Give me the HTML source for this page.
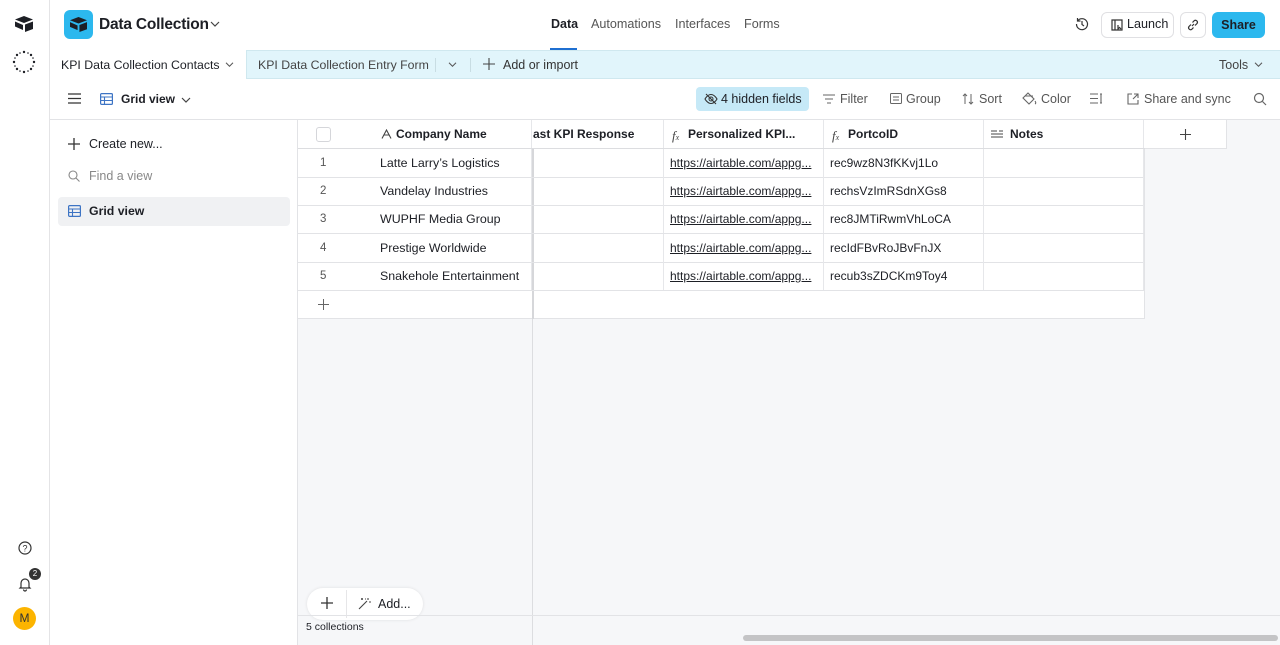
<!DOCTYPE html>
<html><head><meta charset="utf-8"><style>
*{box-sizing:border-box;margin:0;padding:0}
body{width:1280px;height:645px;overflow:hidden;font-family:"Liberation Sans",sans-serif;font-size:13px;color:#1d1f25;background:#f6f7f9;position:relative}
.a{position:absolute}
.t{position:absolute;white-space:nowrap}
svg{position:absolute}
.row{position:absolute;left:298px;height:29px;border-bottom:1px solid #e2e3e6}
.cell{position:absolute;top:0;height:28px;border-right:1px solid #e6e7ea;line-height:28px;padding-left:6px;font-size:12.4px;white-space:nowrap;overflow:hidden}
.h{font-weight:bold;font-size:12px}
</style></head><body>
<!-- left rail -->
<div class="a" style="left:0;top:0;width:50px;height:645px;background:#fff;border-right:1px solid #e4e4e6"></div>
<svg style="left:14px;top:15px" width="20" height="18" viewBox="0 0 20 18"><path d="M10 1L19 4.5L10 8L1 4.5Z" fill="#1d1f25"/><path d="M11 9.5L19 6.5V14L11 17Z" fill="#1d1f25"/><path d="M1 6.5L9 10V15L1 11.5Z" fill="#1d1f25"/></svg>
<svg style="left:12px;top:50px" width="24" height="24" viewBox="0 0 24 24"><g fill="#1d1f25"><circle cx="12" cy="2" r="1.2"/><circle cx="19" cy="5" r="1.2"/><circle cx="22" cy="12" r="1.2"/><circle cx="19" cy="19" r="1.2"/><circle cx="12" cy="22" r="1.2"/><circle cx="5" cy="19" r="1.2"/><circle cx="2" cy="12" r="1.2"/><circle cx="5" cy="5" r="1.2"/><circle cx="16" cy="3" r=".8"/><circle cx="21" cy="8" r=".8"/><circle cx="21" cy="16" r=".8"/><circle cx="16" cy="21" r=".8"/><circle cx="8" cy="21" r=".8"/><circle cx="3" cy="16" r=".8"/><circle cx="3" cy="8" r=".8"/><circle cx="8" cy="3" r=".8"/></g></svg>
<svg style="left:18px;top:541px" width="14" height="14" viewBox="0 0 14 14"><circle cx="7" cy="7" r="6" fill="none" stroke="#333" stroke-width="1.2"/><text x="7" y="10.5" font-size="9" text-anchor="middle" fill="#333" font-family="Liberation Sans">?</text></svg>
<svg style="left:17px;top:576px" width="16" height="16" viewBox="0 0 16 16"><path d="M4 11V7a4 4 0 0 1 8 0v4l1 1H3Z M6.5 13.5a1.5 1.5 0 0 0 3 0" fill="none" stroke="#333" stroke-width="1.2"/></svg>
<div class="a" style="left:29px;top:568px;width:12px;height:12px;border-radius:6px;background:#333;color:#fff;font-size:8px;text-align:center;line-height:12px">2</div>
<div class="a" style="left:13px;top:607px;width:23px;height:23px;border-radius:12px;background:#fcb400;color:#333;font-size:12px;text-align:center;line-height:23px">M</div>

<!-- top bar -->
<div class="a" style="left:50px;top:0;width:1230px;height:50px;background:#fff"></div>
<div class="a" style="left:64px;top:10px;width:29px;height:29px;border-radius:6px;background:#2cb8ee"></div>
<svg style="left:69px;top:16px" width="19" height="17" viewBox="0 0 20 18"><path d="M10 1L19 4.5L10 8L1 4.5Z" fill="#1d1f25"/><path d="M11 9.5L19 6.5V14L11 17Z" fill="#1d1f25"/><path d="M1 6.5L9 10V15L1 11.5Z" fill="#1d1f25"/></svg>
<div class="t" style="left:99px;top:16px;font-size:15.5px;font-weight:bold;letter-spacing:-0.2px">Data Collection</div>
<svg style="left:210px;top:20px" width="10" height="8" viewBox="0 0 10 8"><path d="M1 2l4 4 4-4" fill="none" stroke="#444" stroke-width="1.2"/></svg>
<div class="t" style="left:551px;top:17px;font-size:12.5px;font-weight:bold;color:#1d1f25">Data</div>
<div class="a" style="left:550px;top:48px;width:27px;height:2px;background:#1f6fd1"></div>
<div class="t" style="left:591px;top:17px;color:#555;font-size:12.6px">Automations</div>
<div class="t" style="left:675px;top:17px;color:#555;font-size:12.6px">Interfaces</div>
<div class="t" style="left:744px;top:17px;color:#555;font-size:12.6px">Forms</div>
<svg style="left:1075px;top:17px" width="14" height="14" viewBox="0 0 14 14"><path d="M2.5 4A5.5 5.5 0 1 1 1.5 7M2.5 1v3h3M7 4v3.5l2 1.5" fill="none" stroke="#333" stroke-width="1.2"/></svg>
<div class="a" style="left:1101px;top:12px;width:73px;height:26px;border:1px solid #e0e0e3;border-radius:6px;background:#fff"></div>
<svg style="left:1110px;top:18px" width="14" height="14" viewBox="0 0 14 14"><path d="M2 2h10v10H2ZM5 2v10M8 7v4l1.5-1.5L11 11" fill="none" stroke="#333" stroke-width="1.2"/></svg>
<div class="t" style="left:1127px;top:17px;font-size:12.6px">Launch</div>
<div class="a" style="left:1180px;top:12px;width:26px;height:26px;border:1px solid #e0e0e3;border-radius:6px;background:#fff"></div>
<svg style="left:1186px;top:18px" width="14" height="14" viewBox="0 0 14 14"><path d="M6 8l2-2M5 6.5L3 8.5a2 2 0 0 0 2.8 2.8L7.5 9.5M9 7.5l2-2A2 2 0 0 0 8.2 2.7L6.5 4.5" fill="none" stroke="#333" stroke-width="1.2"/></svg>
<div class="a" style="left:1212px;top:12px;width:53px;height:26px;border-radius:6px;background:#2cb8ee;color:#1d1f25;font-weight:bold;font-size:12.5px;text-align:center;line-height:26px">Share</div>

<!-- tab bar -->
<div class="a" style="left:50px;top:50px;width:1230px;height:29px;background:#e1f5fb;border-top:1px solid #cfe8ef;border-bottom:1px solid #cfe8ef"></div>
<div class="a" style="left:50px;top:50px;width:197px;height:29px;background:#fff;border-right:1px solid #cfe8ef"></div>
<div class="t" style="left:61px;top:58px;font-size:12.3px;color:#1d1f25">KPI Data Collection Contacts</div>
<svg style="left:225px;top:61px" width="9" height="7" viewBox="0 0 10 8"><path d="M1 2l4 4 4-4" fill="none" stroke="#555" stroke-width="1.2"/></svg>
<div class="t" style="left:258px;top:58px;font-size:12.3px;color:#444">KPI Data Collection Entry Form</div>
<div class="a" style="left:435px;top:58px;width:1px;height:14px;background:#c8dde3"></div>
<svg style="left:448px;top:61px" width="9" height="7" viewBox="0 0 10 8"><path d="M1 2l4 4 4-4" fill="none" stroke="#555" stroke-width="1.2"/></svg>
<div class="a" style="left:470px;top:58px;width:1px;height:14px;background:#c8dde3"></div>
<svg style="left:483px;top:58px" width="12" height="12" viewBox="0 0 12 12"><path d="M6 0v12M0 6h12" stroke="#444" stroke-width="1.1"/></svg>
<div class="t" style="left:503px;top:58px;font-size:12.5px;color:#333">Add or import</div>
<div class="t" style="left:1219px;top:58px;font-size:12.5px;color:#444">Tools</div>
<svg style="left:1254px;top:61px" width="9" height="7" viewBox="0 0 10 8"><path d="M1 2l4 4 4-4" fill="none" stroke="#555" stroke-width="1.2"/></svg>

<!-- toolbar -->
<div class="a" style="left:50px;top:79px;width:1230px;height:41px;background:#fff;border-bottom:1px solid #e2e3e6"></div>
<svg style="left:68px;top:93px" width="13" height="11" viewBox="0 0 13 11"><path d="M0 1h13M0 5.5h13M0 10h13" stroke="#333" stroke-width="1.2"/></svg>
<svg style="left:100px;top:93px" width="13" height="12" viewBox="0 0 13 12"><rect x=".6" y=".6" width="11.8" height="10.8" rx="1" fill="none" stroke="#3d74c4" stroke-width="1.2"/><path d="M.6 4h11.8M.6 7.5h11.8M4.5 4v7.4" stroke="#3d74c4" stroke-width="1.1"/></svg>
<div class="t" style="left:121px;top:92px;font-weight:bold;font-size:12px">Grid view</div>
<svg style="left:181px;top:96px" width="10" height="8" viewBox="0 0 10 8"><path d="M1 2l4 4 4-4" fill="none" stroke="#444" stroke-width="1.2"/></svg>
<div class="a" style="left:696px;top:87px;width:113px;height:24px;border-radius:4px;background:#c6e9f7"></div>
<svg style="left:704px;top:93px" width="14" height="12" viewBox="0 0 14 12"><path d="M1 6s2.5-4.5 6-4.5S13 6 13 6s-2.5 4.5-6 4.5S1 6 1 6ZM2 1l10 10" fill="none" stroke="#333" stroke-width="1.1"/><circle cx="7" cy="6" r="2" fill="none" stroke="#333"/></svg>
<div class="t" style="left:721px;top:92px;font-size:12.5px">4 hidden fields</div>
<svg style="left:823px;top:94px" width="12" height="10" viewBox="0 0 12 10"><path d="M0 1h12M2 5h8M4 9h4" stroke="#666" stroke-width="1.1"/></svg>
<div class="t" style="left:840px;top:92px;font-size:12.5px;color:#555">Filter</div>
<svg style="left:890px;top:93px" width="12" height="11" viewBox="0 0 12 11"><rect x=".5" y=".5" width="11" height="10" rx="1" fill="none" stroke="#666"/><path d="M3 4h6M3 7h6" stroke="#666"/></svg>
<div class="t" style="left:906px;top:92px;font-size:12.5px;color:#555">Group</div>
<svg style="left:962px;top:93px" width="12" height="12" viewBox="0 0 12 12"><path d="M3 1v10M1 3l2-2 2 2M9 11V1M7 9l2 2 2-2" fill="none" stroke="#666"/></svg>
<div class="t" style="left:979px;top:92px;font-size:12.5px;color:#555">Sort</div>
<svg style="left:1022px;top:92px" width="15" height="14" viewBox="0 0 15 14"><path d="M6 1l6 6-5 5-6-6ZM3 4l8 0M13 9c1 1.5 1 2.5 0 3" fill="none" stroke="#666" stroke-width="1.1"/></svg>
<div class="t" style="left:1041px;top:92px;font-size:12.5px;color:#555">Color</div>
<svg style="left:1090px;top:93px" width="14" height="11" viewBox="0 0 14 11"><path d="M0 1h8M0 5.5h8M0 10h8M11 1v9M10 1h2M10 10h2" stroke="#666" stroke-width="1.1"/></svg>
<svg style="left:1127px;top:93px" width="12" height="12" viewBox="0 0 12 12"><path d="M5 1H1v10h10V7M7 1h4v4M11 1L6 6" fill="none" stroke="#666" stroke-width="1.1"/></svg>
<div class="t" style="left:1144px;top:92px;font-size:12.5px;color:#555">Share and sync</div>
<svg style="left:1253px;top:92px" width="14" height="14" viewBox="0 0 14 14"><circle cx="6" cy="6" r="4.5" fill="none" stroke="#666" stroke-width="1.2"/><path d="M9.5 9.5L13 13" stroke="#666" stroke-width="1.2"/></svg>

<!-- sidebar -->
<div class="a" style="left:50px;top:120px;width:248px;height:525px;background:#fff;border-right:1px solid #e2e3e6"></div>
<svg style="left:68px;top:138px" width="12" height="12" viewBox="0 0 12 12"><path d="M6 0v12M0 6h12" stroke="#333" stroke-width="1.3"/></svg>
<div class="t" style="left:89px;top:137px;font-size:12.5px">Create new...</div>
<svg style="left:68px;top:170px" width="12" height="12" viewBox="0 0 12 12"><circle cx="5" cy="5" r="4" fill="none" stroke="#888" stroke-width="1.1"/><path d="M8 8l3.5 3.5" stroke="#888" stroke-width="1.1"/></svg>
<div class="t" style="left:89px;top:169px;font-size:12.5px;color:#888">Find a view</div>
<div class="a" style="left:58px;top:197px;width:232px;height:29px;border-radius:4px;background:#f0f1f3"></div>
<svg style="left:68px;top:205px" width="13" height="12" viewBox="0 0 13 12"><rect x=".6" y=".6" width="11.8" height="10.8" rx="1" fill="none" stroke="#3d74c4" stroke-width="1.2"/><path d="M.6 4h11.8M.6 7.5h11.8M4.5 4v7.4" stroke="#3d74c4" stroke-width="1.1"/></svg>
<div class="t" style="left:89px;top:204px;font-size:12.3px;font-weight:bold">Grid view</div>

<!-- grid -->
<div class="a" style="left:298px;top:120px;width:235px;height:525px;background:#f6f7f9;border-right:1px solid #dcdde0"></div>
<div class="a" style="left:298px;top:120px;width:847px;height:199px;background:#fff;border-right:1px solid #e2e3e6;border-bottom:1px solid #e2e3e6"></div>
<div class="a" style="left:1145px;top:120px;width:82px;height:29px;background:#fff;border-bottom:1px solid #e2e3e6;border-right:1px solid #e2e3e6"></div>
<div class="a" style="left:532px;top:120px;width:2px;height:199px;background:#d6d7da"></div>
<!-- header -->
<div class="row" style="top:120px;width:847px;background:#fff;border-bottom:1px solid #dcdde0">
<div class="cell" style="left:0;width:72px;border-right:none"><div class="a" style="left:18px;top:7px;width:15px;height:15px;border:1px solid #d5d6da;border-radius:3px"></div></div>
<div class="cell h" style="left:72px;width:162px;padding-left:26px">Company Name</div>
<div class="cell h" style="left:235px;width:131px;padding-left:0">ast KPI Response</div>
<div class="cell h" style="left:366px;width:160px;padding-left:24px">Personalized KPI...</div>
<div class="cell h" style="left:526px;width:160px;padding-left:24px">PortcoID</div>
<div class="cell h" style="left:686px;width:160px;padding-left:26px">Notes</div>
</div>
<svg style="left:381px;top:129px" width="11" height="10" viewBox="0 0 11 10"><path d="M1 9.5L5.5 1 10 9.5M3 6h5" fill="none" stroke="#444" stroke-width="1.1"/></svg>
<div class="t" style="left:672px;top:128px;font-style:italic;font-family:'Liberation Serif',serif;font-size:13px;color:#444">f<span style="font-size:8px">x</span></div>
<div class="t" style="left:832px;top:128px;font-style:italic;font-family:'Liberation Serif',serif;font-size:13px;color:#444">f<span style="font-size:8px">x</span></div>
<svg style="left:991px;top:130px" width="12" height="9" viewBox="0 0 12 9"><path d="M0 1h6M0 4h12M0 7h12M8 1h4" stroke="#444" stroke-width="1.1"/></svg>
<svg style="left:1180px;top:129px" width="11" height="11" viewBox="0 0 12 12"><path d="M6 0v12M0 6h12" stroke="#444" stroke-width="1.2"/></svg>

<!-- rows -->
<div class="row" style="top:149px;width:847px"><div class="cell" style="left:0;width:72px;border-right:none;padding-left:22px;color:#555;font-size:11.5px">1</div><div class="cell" style="left:72px;width:162px;padding-left:10px">Latte Larry’s Logistics</div><div class="cell" style="left:236px;width:130px"></div><div class="cell" style="left:366px;width:160px;text-decoration:underline;font-size:12px">https://airtable.com/appg...</div><div class="cell" style="left:526px;width:160px;font-size:12px">rec9wz8N3fKKvj1Lo</div><div class="cell" style="left:686px;width:160px"></div></div>
<div class="row" style="top:177px;width:847px"><div class="cell" style="left:0;width:72px;border-right:none;padding-left:22px;color:#555;font-size:11.5px">2</div><div class="cell" style="left:72px;width:162px;padding-left:10px">Vandelay Industries</div><div class="cell" style="left:236px;width:130px"></div><div class="cell" style="left:366px;width:160px;text-decoration:underline;font-size:12px">https://airtable.com/appg...</div><div class="cell" style="left:526px;width:160px;font-size:12px">rechsVzImRSdnXGs8</div><div class="cell" style="left:686px;width:160px"></div></div>
<div class="row" style="top:205px;width:847px"><div class="cell" style="left:0;width:72px;border-right:none;padding-left:22px;color:#555;font-size:11.5px">3</div><div class="cell" style="left:72px;width:162px;padding-left:10px">WUPHF Media Group</div><div class="cell" style="left:236px;width:130px"></div><div class="cell" style="left:366px;width:160px;text-decoration:underline;font-size:12px">https://airtable.com/appg...</div><div class="cell" style="left:526px;width:160px;font-size:12px">rec8JMTiRwmVhLoCA</div><div class="cell" style="left:686px;width:160px"></div></div>
<div class="row" style="top:234px;width:847px"><div class="cell" style="left:0;width:72px;border-right:none;padding-left:22px;color:#555;font-size:11.5px">4</div><div class="cell" style="left:72px;width:162px;padding-left:10px">Prestige Worldwide</div><div class="cell" style="left:236px;width:130px"></div><div class="cell" style="left:366px;width:160px;text-decoration:underline;font-size:12px">https://airtable.com/appg...</div><div class="cell" style="left:526px;width:160px;font-size:12px">recIdFBvRoJBvFnJX</div><div class="cell" style="left:686px;width:160px"></div></div>
<div class="row" style="top:262px;width:847px"><div class="cell" style="left:0;width:72px;border-right:none;padding-left:22px;color:#555;font-size:11.5px">5</div><div class="cell" style="left:72px;width:162px;padding-left:10px">Snakehole Entertainment</div><div class="cell" style="left:236px;width:130px"></div><div class="cell" style="left:366px;width:160px;text-decoration:underline;font-size:12px">https://airtable.com/appg...</div><div class="cell" style="left:526px;width:160px;font-size:12px">recub3sZDCKm9Toy4</div><div class="cell" style="left:686px;width:160px"></div></div>
<svg style="left:318px;top:299px" width="11" height="11" viewBox="0 0 12 12"><path d="M6 0v12M0 6h12" stroke="#666" stroke-width="1.1"/></svg>

<!-- bottom -->
<div class="a" style="left:307px;top:588px;width:116px;height:32px;border-radius:16px;background:#fff;box-shadow:0 0 3px rgba(0,0,0,.1)"></div>
<div class="a" style="left:346px;top:590px;width:1px;height:28px;background:#e6e6e8"></div>
<svg style="left:321px;top:597px" width="12" height="12" viewBox="0 0 12 12"><path d="M6 0v12M0 6h12" stroke="#333" stroke-width="1.3"/></svg>
<svg style="left:358px;top:597px" width="13" height="13" viewBox="0 0 13 13"><path d="M1 12L9 4M7 2l1 0M10 1v2M11 5h2M4 1v2M3 2h2" stroke="#444" stroke-width="1.1" fill="none"/></svg>
<div class="t" style="left:378px;top:597px;font-size:12.5px">Add...</div>
<div class="a" style="left:298px;top:615px;width:982px;height:1px;background:#e2e3e6"></div>
<div class="t" style="left:306px;top:621px;font-size:10.5px">5 collections</div>
<div class="a" style="left:743px;top:635px;width:535px;height:6px;border-radius:3px;background:#c4c4c6"></div>
</body></html>
